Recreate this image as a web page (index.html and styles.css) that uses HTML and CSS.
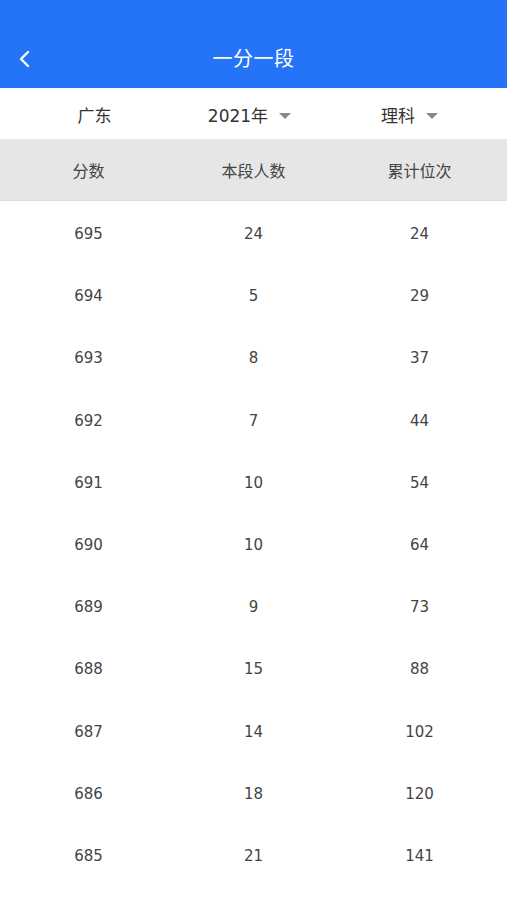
FILE: index.html
```html
<!DOCTYPE html>
<html lang="zh">
<head>
<meta charset="utf-8">
<link rel="stylesheet" href="styles.css">
</head>
<body>
<div class="app">
  <header class="topbar">
    <svg class="back" width="14" height="20" viewBox="0 0 14 20"><path d="M11 3 L4 10 L11 17" fill="none" stroke="#fff" stroke-width="2.4" stroke-linecap="round" stroke-linejoin="round"/></svg>
    <h1 class="title">一分一段</h1>
  </header>
  <div class="filters">
    <div class="filter f1"><span>广东</span></div>
    <div class="filter f2"><span>2021年</span><i class="caret"></i></div>
    <div class="filter f3"><span>理科</span><i class="caret"></i></div>
  </div>
  <div class="thead">
    <div>分数</div><div>本段人数</div><div>累计位次</div>
  </div>
  <div class="tbody">
    <div class="row"><div>695</div><div>24</div><div>24</div></div>
    <div class="row"><div>694</div><div>5</div><div>29</div></div>
    <div class="row"><div>693</div><div>8</div><div>37</div></div>
    <div class="row"><div>692</div><div>7</div><div>44</div></div>
    <div class="row"><div>691</div><div>10</div><div>54</div></div>
    <div class="row"><div>690</div><div>10</div><div>64</div></div>
    <div class="row"><div>689</div><div>9</div><div>73</div></div>
    <div class="row"><div>688</div><div>15</div><div>88</div></div>
    <div class="row"><div>687</div><div>14</div><div>102</div></div>
    <div class="row"><div>686</div><div>18</div><div>120</div></div>
    <div class="row"><div>685</div><div>21</div><div>141</div></div>
  </div>
</div>
</body>
</html>
```
FILE: styles.css
```css
* { box-sizing: border-box; }
html, body { margin: 0; padding: 0; background: #fff; }
body {
  font-family: "DejaVu Sans", "Noto Sans CJK SC", sans-serif;
  color: #333;
  overflow: hidden;
}
.app { width: 507px; height: 900px; overflow: hidden; }
.topbar {
  height: 88px;
  background: #2573f6;
  display: flex;
  align-items: flex-end;
  justify-content: center;
  padding-bottom: 16px;
  position: relative;
}
.back { position: absolute; left: 17px; bottom: 19px; }
.title {
  margin: 0;
  font-family: "Noto Sans CJK SC", sans-serif;
  font-size: 20px;
  font-weight: 400;
  color: #fff;
  line-height: 28px;
  letter-spacing: 0.5px;
}
.filters {
  height: 51px;
  padding-top: 4px;
  display: grid;
  grid-template-columns: 1fr 1fr 1fr;
  align-items: center;
  font-size: 17px;
  color: #333;
}
.filter { display: flex; align-items: center; justify-content: center; line-height: 22px; }
.f1 { padding-left: 20px; }
.f2 { margin-left: -8px; }
.f3 { margin-left: -26px; }
.caret {
  display: inline-block;
  width: 0; height: 0;
  border-left: 6px solid transparent;
  border-right: 6px solid transparent;
  border-top: 6px solid #8a8a8a;
  margin-left: 11px;
}
.thead {
  height: 62px;
  background: #e6e6e6;
  display: grid;
  grid-template-columns: 1fr 1fr 1fr;
  align-items: center;
  text-align: center;
  font-size: 16px;
  color: #444;
  border-bottom: 1px solid #ddd;
}
.thead div:nth-child(1) { margin-left: 8px; }
.thead div:nth-child(3) { margin-left: -6px; }
.tbody { padding-top: 2px; }
.row {
  height: 62.2px;
  display: grid;
  grid-template-columns: 1fr 1fr 1fr;
  align-items: center;
  text-align: center;
  font-size: 15px;
  color: #444;
}
.row div:nth-child(1) { margin-left: 8px; }
.row div:nth-child(3) { margin-left: -6px; }
```
